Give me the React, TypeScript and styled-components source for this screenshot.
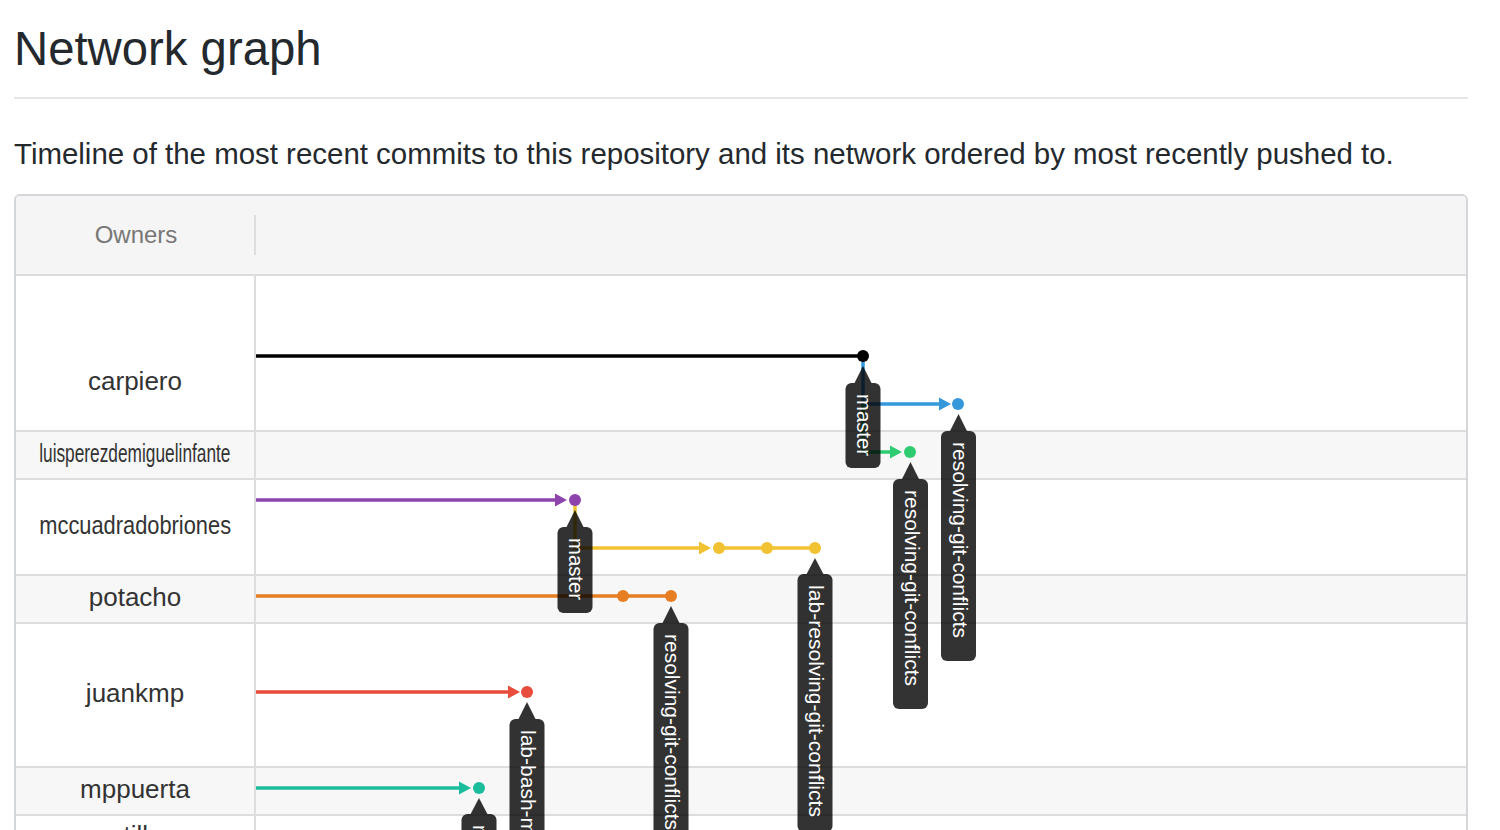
import React from "react";
import styled, { createGlobalStyle } from "styled-components";

const GlobalStyle = createGlobalStyle`
  html, body {
    margin: 0;
    padding: 0;
    overflow: hidden;
    background: #ffffff;
  }
  body {
    font-family: "Liberation Sans", Arial, sans-serif;
    color: #24292e;
  }
  * { box-sizing: border-box; }
`;

const Page = styled.main`
  width: 1454px;
  margin-left: 14px;
`;

const Title = styled.h1`
  margin: 21px 0 0;
  padding-bottom: 20px;
  border-bottom: 2px solid #e4e7ea;
  font-size: 47.3px;
  font-weight: 400;
  line-height: 56px;
  color: #24292e;
`;

const Lead = styled.p`
  margin: 37px 0 22px;
  font-size: 29.45px;
  line-height: 36px;
  color: #24292e;
  white-space: nowrap;
`;

const GraphBox = styled.section`
  border: 2px solid #d3d6da;
  border-radius: 6px;
  overflow: hidden;
`;

const Header = styled.div`
  display: flex;
  align-items: center;
  height: 80px;
  background: #f5f5f5;
  border-bottom: 2px solid #dcdcdc;
`;

const OwnersHeading = styled.div`
  width: 238px;
  text-align: center;
  font-size: 24px;
  color: #777777;
  padding-left: 2px;
`;

const HeaderDivider = styled.div`
  width: 2px;
  height: 40px;
  background: #dddddd;
`;

const Body = styled.div`
  position: relative;
`;

const Row = styled.div<{ $h: number; $alt: boolean }>`
  display: grid;
  grid-template-columns: 240px 1fr;
  height: ${(p) => p.$h}px;
  background: ${(p) => (p.$alt ? "#f7f7f7" : "#ffffff")};
  border-bottom: 2px solid #dddddd;
`;

const OwnerCell = styled.div<{ $pt: number }>`
  display: flex;
  align-items: center;
  justify-content: center;
  padding-top: ${(p) => p.$pt}px;
  padding-bottom: 4px;
  border-right: 2px solid #dddddd;
  overflow: hidden;
  white-space: nowrap;
`;

const OwnerName = styled.span<{ $scale: number }>`
  display: inline-block;
  font-size: 26px;
  color: #333333;
  transform: scaleX(${(p) => p.$scale});
  transform-origin: center;
`;

const GraphLayer = styled.svg`
  position: absolute;
  top: 1px;
  left: 240px;
  width: calc(100% - 240px);
  height: 100%;
  overflow: visible;
  pointer-events: none;
`;

const TagText = styled.text`
  fill: #ffffff;
  font-family: "Liberation Sans", Arial, sans-serif;
  font-size: 21px;
`;

type Owner = { name: string; h: number; pt?: number; alt: boolean; scale?: number };

const owners: Owner[] = [
  { name: "carpiero", h: 156, pt: 60, alt: false },
  { name: "luisperezdemiguelinfante", h: 48, alt: true, scale: 0.665 },
  { name: "mccuadradobriones", h: 96, alt: false, scale: 0.84 },
  { name: "potacho", h: 48, alt: true },
  { name: "juankmp", h: 144, alt: false },
  { name: "mppuerta", h: 48, alt: true },
  { name: "antillas", h: 44, alt: false },
  { name: "rlopez", h: 48, alt: true },
];

const C = {
  black: "#000000",
  blue: "#3498db",
  green: "#2ecc71",
  purple: "#8e44ad",
  yellow: "#f1c232",
  orange: "#e67e22",
  red: "#e74c3c",
  teal: "#1abc9c",
};

const SW = 3.5;

function Dot({ x, y, c }: { x: number; y: number; c: string }) {
  return <circle cx={x} cy={y} r={6} fill={c} />;
}

function Arrow({ base, y, c }: { base: number; y: number; c: string }) {
  return <polygon points={`${base},${y - 6.5} ${base + 12},${y} ${base},${y + 6.5}`} fill={c} />;
}

function Tag({
  cx,
  dotY,
  top,
  h,
  text,
  len,
}: {
  cx: number;
  dotY: number;
  top: number;
  h: number;
  text: string;
  len?: number;
}) {
  const apex = dotY + 10;
  return (
    <g>
      <g opacity={0.8}>
        <path
          d={`M${cx} ${apex} L${cx + 11} ${top + 5} L${cx - 11} ${top + 5} Z`}
          fill="#000"
        />
        <rect x={cx - 17.5} y={top} width={35} height={h} rx={6} fill="#000" />
      </g>
      <TagText
        transform={`translate(${cx} ${top + 11}) rotate(90)`}
        x={0}
        y={6}
        {...(len ? { textLength: len, lengthAdjust: "spacingAndGlyphs" } : {})}
      >
        {text}
      </TagText>
    </g>
  );
}

function Graph() {
  return (
    <GraphLayer>
      {/* carpiero master */}
      <line x1={0} y1={79} x2={607} y2={79} stroke={C.black} strokeWidth={SW} />
      {/* blue branch */}
      <path d="M607 79 V127 H684" stroke={C.blue} strokeWidth={SW} fill="none" />
      <Arrow base={683} y={127} c={C.blue} />
      {/* green branch */}
      <path d="M607 127 V175 H635" stroke={C.green} strokeWidth={SW} fill="none" />
      <Arrow base={634} y={175} c={C.green} />
      <Dot x={607} y={79} c={C.black} />
      <Dot x={702} y={127} c={C.blue} />
      <Dot x={654} y={175} c={C.green} />

      {/* purple */}
      <line x1={0} y1={223} x2={300} y2={223} stroke={C.purple} strokeWidth={SW} />
      <Arrow base={299} y={223} c={C.purple} />
      {/* yellow */}
      <path d="M319 223 V271 H444" stroke={C.yellow} strokeWidth={SW} fill="none" />
      <Arrow base={443} y={271} c={C.yellow} />
      <line x1={463} y1={271} x2={559} y2={271} stroke={C.yellow} strokeWidth={SW} />
      <Dot x={319} y={223} c={C.purple} />
      <Dot x={463} y={271} c={C.yellow} />
      <Dot x={511} y={271} c={C.yellow} />
      <Dot x={559} y={271} c={C.yellow} />

      {/* orange */}
      <line x1={0} y1={319} x2={415} y2={319} stroke={C.orange} strokeWidth={SW} />
      <Dot x={367} y={319} c={C.orange} />
      <Dot x={415} y={319} c={C.orange} />

      {/* red */}
      <line x1={0} y1={415} x2={253} y2={415} stroke={C.red} strokeWidth={SW} />
      <Arrow base={252} y={415} c={C.red} />
      <Dot x={271} y={415} c={C.red} />

      {/* teal */}
      <line x1={0} y1={511} x2={204} y2={511} stroke={C.teal} strokeWidth={SW} />
      <Arrow base={203} y={511} c={C.teal} />
      <Dot x={223} y={511} c={C.teal} />

      {/* labels */}
      <Tag cx={607} dotY={79} top={106} h={85} text="master" len={62} />
      <Tag cx={702.5} dotY={127} top={154} h={230} text="resolving-git-conflicts" len={196} />
      <Tag cx={654.5} dotY={175} top={202} h={230} text="resolving-git-conflicts" len={196} />
      <Tag cx={319} dotY={223} top={250} h={86} text="master" len={62} />
      <Tag cx={559} dotY={271} top={297} h={258} text="lab-resolving-git-conflicts" len={232} />
      <Tag cx={415} dotY={319} top={346} h={230} text="resolving-git-conflicts" len={196} />
      <Tag cx={271} dotY={415} top={442} h={180} text="lab-bash-master" />
      <Tag cx={223} dotY={511} top={537} h={86} text="master" len={62} />
    </GraphLayer>
  );
}

export default function App() {
  return (
    <>
      <GlobalStyle />
      <Page>
        <Title>Network graph</Title>
        <Lead>
          Timeline of the most recent commits to this repository and its network ordered by most
          recently pushed to.
        </Lead>
        <GraphBox>
          <Header>
            <OwnersHeading>Owners</OwnersHeading>
            <HeaderDivider />
          </Header>
          <Body>
            {owners.map((o) => (
              <Row key={o.name} $h={o.h} $alt={o.alt}>
                <OwnerCell $pt={o.pt ?? 0}>
                  <OwnerName $scale={o.scale ?? 1}>{o.name}</OwnerName>
                </OwnerCell>
                <div />
              </Row>
            ))}
            <Graph />
          </Body>
        </GraphBox>
      </Page>
    </>
  );
}
